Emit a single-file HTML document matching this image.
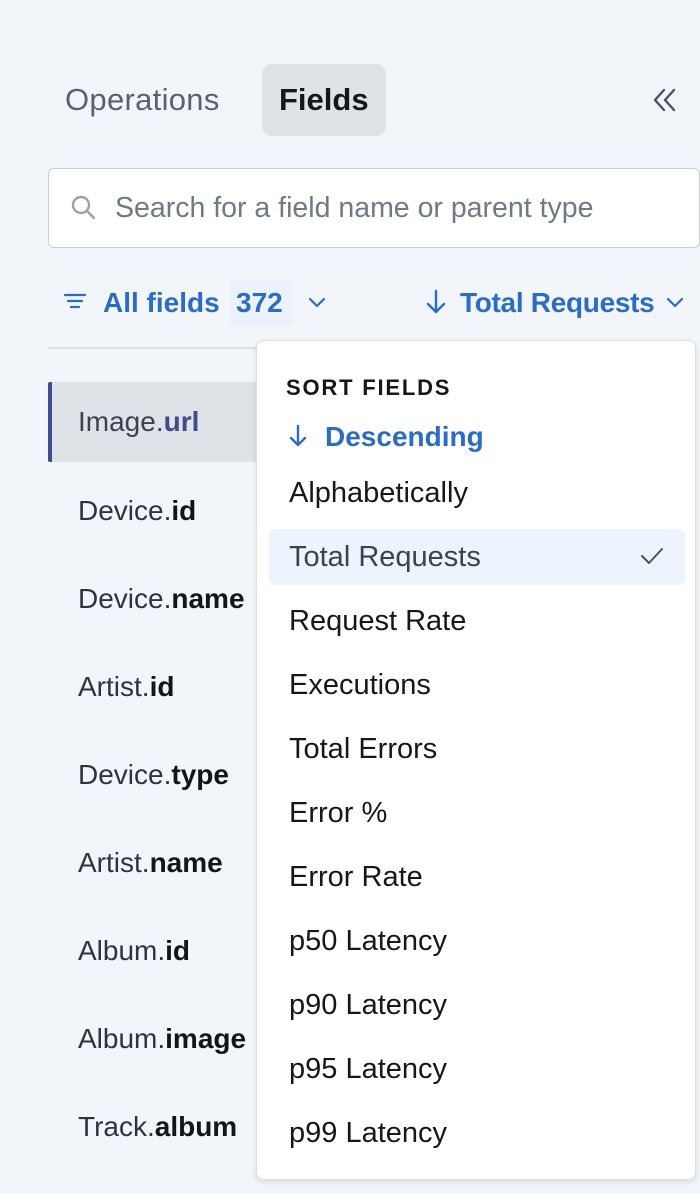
<!DOCTYPE html>
<html><head><meta charset="utf-8"><style>
*{margin:0;padding:0;box-sizing:border-box}
body{width:700px;height:1194px;background:#f2f5f9;font-family:"Liberation Sans",sans-serif;position:relative;overflow:hidden}
.a{position:absolute;white-space:nowrap}
.tab{font-size:31px;line-height:72px;top:64px}
.row{position:absolute;left:48px;width:220px;height:80px;line-height:80px;padding-left:30px;font-size:28px;color:#2d3340}
.row b{color:#12151a}
.dd{position:absolute;left:256px;top:340px;width:440px;height:840px;background:#fff;border:1px solid #dde1e6;border-radius:8px;box-shadow:0 2px 6px rgba(0,0,0,.12)}
.it{position:absolute;left:32px;font-size:29px;color:#14171c;line-height:56px;height:56px}
</style></head><body>
<div class="a tab" style="left:65px;color:#5a6270;letter-spacing:0.3px">Operations</div>
<div class="a" style="left:262px;top:64px;width:124px;height:72px;background:#dfe2e7;border-radius:10px"></div>
<div class="a tab" style="left:279px;font-weight:bold;color:#14171c">Fields</div>
<svg class="a" style="left:650px;top:86px" width="28" height="28" viewBox="0 0 28 28" fill="none" stroke="#4a5260" stroke-width="2.4" stroke-linecap="round" stroke-linejoin="round"><path d="M14 4 L5 14 L14 24 M24 4 L15 14 L24 24"/></svg>
<div class="a" style="left:48px;top:168px;width:652px;height:80px;background:#fff;border:1.5px solid #c8ced6;border-radius:6px"></div>
<svg class="a" style="left:70px;top:194px" width="28" height="28" viewBox="0 0 28 28" fill="none" stroke="#9aa1ab" stroke-width="2.4" stroke-linecap="round"><circle cx="11" cy="11" r="8"/><path d="M17 17 L24 24"/></svg>
<div class="a" style="left:115px;top:188px;font-size:28.5px;line-height:40px;color:#717985">Search for a field name or parent type</div>
<svg class="a" style="left:62px;top:291px" width="26" height="22" viewBox="0 0 26 22" stroke="#2b6cc4" stroke-width="2.2" stroke-linecap="round"><path d="M3 4H23M6 10H20M9 16H17"/></svg>
<div class="a" style="left:103px;top:283px;font-size:28px;line-height:40px;font-weight:bold;color:#2b6cc4">All fields</div>
<div class="a" style="left:230px;top:280px;width:62px;height:46px;background:#ebf2fb;border-radius:4px"></div>
<div class="a" style="left:236px;top:283px;font-size:28px;line-height:40px;font-weight:bold;color:#2b6cc4">372</div>
<svg class="a" style="left:306px;top:293px" width="22" height="18" viewBox="0 0 22 18" fill="none" stroke="#2b6cc4" stroke-width="2.2" stroke-linecap="round" stroke-linejoin="round"><path d="M4 6 L11 13 L18 6"/></svg>
<svg class="a" style="left:424px;top:288px" width="24" height="28" viewBox="0 0 24 28" fill="none" stroke="#2b6cc4" stroke-width="2.4" stroke-linecap="round" stroke-linejoin="round"><path d="M12 3V24M4 16L12 24L20 16"/></svg>
<div class="a" style="left:460px;top:283px;font-size:28px;line-height:40px;font-weight:bold;color:#2b6cc4;letter-spacing:-0.3px">Total Requests</div>
<svg class="a" style="left:664px;top:293px" width="22" height="18" viewBox="0 0 22 18" fill="none" stroke="#2b6cc4" stroke-width="2.2" stroke-linecap="round" stroke-linejoin="round"><path d="M4 6 L11 13 L18 6"/></svg>
<div class="a" style="left:48px;top:347px;width:210px;height:2px;background:#dde1e6"></div>

<div class="row" style="top:382px;background:#dfe2e7;border-left:4px solid #3f4d8b;padding-left:26px;border-radius:2px 0 0 2px"><span style="color:#3b4252">Image.</span><b style="color:#3f4d8b">url</b></div>
<div class="row" style="top:471px">Device.<b>id</b></div>
<div class="row" style="top:559px">Device.<b>name</b></div>
<div class="row" style="top:647px">Artist.<b>id</b></div>
<div class="row" style="top:735px">Device.<b>type</b></div>
<div class="row" style="top:823px">Artist.<b>name</b></div>
<div class="row" style="top:911px">Album.<b>id</b></div>
<div class="row" style="top:999px">Album.<b>image</b></div>
<div class="row" style="top:1087px">Track.<b>album</b></div>

<div class="dd">
<div class="a" style="left:29px;top:34px;font-size:22px;font-weight:bold;letter-spacing:1.8px;color:#14171c">SORT FIELDS</div>
<svg class="a" style="left:30px;top:82px" width="22" height="26" viewBox="0 0 22 26" fill="none" stroke="#2b6cc4" stroke-width="2.4" stroke-linecap="round" stroke-linejoin="round"><path d="M11 3V22M4 15L11 22L18 15"/></svg>
<div class="a" style="left:68px;top:76px;font-size:28px;line-height:40px;font-weight:bold;color:#2b6cc4">Descending</div>
<div class="it" style="top:124px">Alphabetically</div>
<div class="a" style="left:12px;top:188px;width:416px;height:56px;background:#edf4fd;border-radius:6px"></div>
<div class="it" style="top:188px;color:#3b4250">Total Requests</div>
<svg class="a" style="left:382px;top:204px" width="26" height="22" viewBox="0 0 26 22" fill="none" stroke="#4a5260" stroke-width="2" stroke-linecap="round" stroke-linejoin="round"><path d="M3 11L10 18L23 4"/></svg>
<div class="it" style="top:252px">Request Rate</div>
<div class="it" style="top:316px">Executions</div>
<div class="it" style="top:380px">Total Errors</div>
<div class="it" style="top:444px">Error %</div>
<div class="it" style="top:508px">Error Rate</div>
<div class="it" style="top:572px">p50 Latency</div>
<div class="it" style="top:636px">p90 Latency</div>
<div class="it" style="top:700px">p95 Latency</div>
<div class="it" style="top:764px">p99 Latency</div>
</div>
</body></html>
